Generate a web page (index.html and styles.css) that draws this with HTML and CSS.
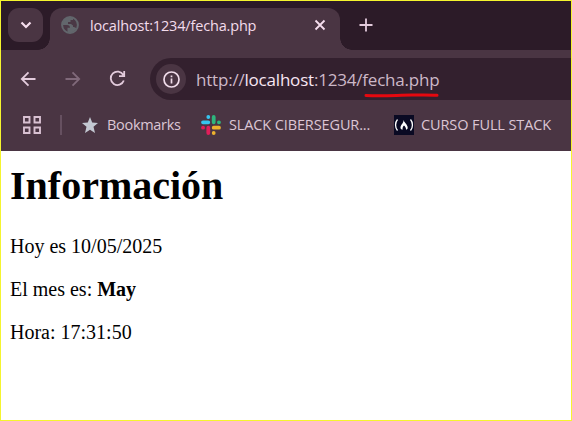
FILE: index.html
```html
<!DOCTYPE html>
<html lang="es">
<head>
<meta charset="utf-8">
<title>fecha.php</title>
<link rel="stylesheet" href="styles.css">
</head>
<body>
<div class="window">
  <header class="tabstrip">
    <div class="tab-search"><svg width="12" height="8" viewBox="0 0 12 8"><path d="M1.500 1.500 6 6l4.500-4.500" fill="none" stroke="#f6deee" stroke-width="2.200"/></svg></div>
    <div class="tab">
      <svg class="globe" width="18" height="18" viewBox="0 0 18 18"><circle cx="9" cy="9" r="7.900" fill="#4a3845" stroke="#62666c" stroke-width="2"/><path d="M10 1C4 1 1 5 1 9h5c2 .1 3 1.300 3 2.800H6.500v4.700c4 .8 7-.9 9-4-1-1-2-1.500-3.500-1.500V9.500L10 8H7V6h2.500V4H12V2z" fill="#62666c"/></svg>
      <span class="title">localhost:1234/fecha.php</span>
      <svg class="close" width="12" height="12" viewBox="0 0 12 12"><path d="m1.500 1.500 9 9m0-9-9 9" stroke="#f6deee" stroke-width="1.800"/></svg>
    </div>
    <svg class="plus" width="14" height="14" viewBox="0 0 14 14"><path d="M7 .5v13M.5 7h13" stroke="#e3cbdc" stroke-width="1.800"/></svg>
  </header>
  <nav class="toolbar">
    <svg class="back" width="16" height="16" viewBox="0 0 16 16"><path d="M15.500 8H2M8.500 1.300 1.800 8l6.700 6.700" fill="none" stroke="#e3cbdc" stroke-width="1.800"/></svg>
    <svg class="forward" width="16" height="16" viewBox="0 0 16 16"><path d="M.5 8H14M7.500 1.300 14.200 8l-6.700 6.700" fill="none" stroke="#80697a" stroke-width="1.800"/></svg>
    <svg class="reload" width="17" height="17" viewBox="0 0 17 17"><path d="M14.300 5A6.700 6.700 0 1 0 14.800 10.500M15.200 1v5.200H10" fill="none" stroke="#e3cbdc" stroke-width="1.800"/></svg>
    <div class="omnibox">
      <div class="info"><svg width="17" height="17" viewBox="0 0 17 17"><circle cx="8.500" cy="8.500" r="7.500" fill="none" stroke="#f0dcea" stroke-width="1.700"/><path d="M8.500 7.500v5M8.500 4.500v1.700" stroke="#f0dcea" stroke-width="1.700"/></svg></div>
      <span class="url">http://<b>localhost</b>:1234/fecha.php</span>
      <svg class="mark" width="76" height="6" viewBox="0 0 76 6"><path d="M2 3.400C18 4.800 34 3 48 3c10 0 17-.3 25 .3" fill="none" stroke="#e6080f" stroke-width="3" stroke-linecap="round"/></svg>
    </div>
  </nav>
  <nav class="bookmarks">
    <svg class="apps" width="18" height="18" viewBox="0 0 18 18"><path d="M1 1h5.500v5.500H1zM11.500 1H17v5.500h-5.500zM1 11.500h5.500V17H1zM11.500 11.500H17V17h-5.500z" fill="none" stroke="#d9c1d2" stroke-width="1.900"/></svg>
    <i class="divider"></i>
    <svg class="star" width="16" height="16" viewBox="0 0 16 16"><path d="m8 0 2.200 5.500 5.800.5-4.500 3.800L13 16l-5-3.300L3 16l1.500-6.200L0 6l5.800-.5z" fill="#c3c8d2"/></svg>
    <span class="label bm">Bookmarks</span>
    <svg class="slack" width="20" height="20" viewBox="0 0 20 20"><g stroke-width="3.800" stroke-linecap="round"><path d="M2 7.300h5.300M7.300 2v.1" stroke="#36c5f0"/><path d="M12.700 2v5.300M18 7.300h-.1" stroke="#2eb67d"/><path d="M18 12.700h-5.300M12.700 18v-.1" stroke="#ecb22e"/><path d="M7.300 18v-5.300M2 12.700h.1" stroke="#e01e5a"/></g></svg>
    <span class="label sl">SLACK CIBERSEGUR...</span>
    <svg class="fcc" width="20" height="20" viewBox="0 0 20 20"><path d="M0 0h20v20H0z" fill="#0a0a23"/><path d="M3.500 4.500c-2.600 3-2.600 8 0 11M16.500 4.500c2.600 3 2.600 8 0 11" fill="none" stroke="#fff" stroke-width="1.300"/><path d="M9.500 5c.5 2 3 3.500 4 6.500.5 1.800 0 2.800-1.300 3.300-.2-1.800-1-3.300-2.200-4.300-1.200 1-1.500 2.300-1.500 4.300-2-.5-2.500-1.800-1.700-3.800C7.700 9 9.800 7.500 9.500 5z" fill="#fff"/></svg>
    <span class="label cu">CURSO FULL STACK</span>
  </nav>
  <main class="page">
    <h1>Información</h1>
    <p>Hoy es 10/05/2025</p>
    <p>El mes es: <b>May</b></p>
    <p>Hora: 17:31:50</p>
  </main>
</div>
</body>
</html>
```
FILE: styles.css
```css
* { box-sizing: border-box; }
body { margin: 0; }
svg { display: block; flex: none; }
.window {
  width: 572px;
  height: 421px;
  border: 1px solid #f5f52e;
  background: #fff;
  display: flex;
  flex-direction: column;
  overflow: hidden;
  font-family: "Open Sans", "Noto Sans", sans-serif;
  white-space: nowrap;
}
.tabstrip {
  height: 49px;
  flex: none;
  display: flex;
  background: #2c1b28;
}
.tab-search {
  width: 35px;
  height: 34px;
  margin: 7px 0 0 7px;
  border-radius: 11px;
  background: #4a3543;
  display: flex;
  align-items: center;
  justify-content: center;
}
.tab {
  position: relative;
  width: 290px;
  height: 42px;
  margin: 7px 0 0 7px;
  padding: 0 14px 8px 11px;
  border-radius: 12px 12px 0 0;
  background: #4a3543;
  display: flex;
  align-items: center;
}
.tab::before,
.tab::after {
  content: "";
  position: absolute;
  bottom: 0;
  width: 12px;
  height: 12px;
}
.tab::before { left: -12px; background: radial-gradient(circle at 0 0, transparent 11.5px, #4a3543 12px); }
.tab::after { right: -12px; background: radial-gradient(circle at 100% 0, transparent 11.5px, #4a3543 12px); }
.title {
  margin-left: 11px;
  font-size: 14.5px;
  letter-spacing: -0.17px;
  color: #f3dcec;
}
.close { margin-left: auto; }
.plus { margin: 17px 0 0 19px; }
.toolbar {
  height: 50px;
  flex: none;
  display: flex;
  align-items: center;
  padding: 8px 0 0 19px;
  background: #4a3543;
}
.toolbar > svg { margin-bottom: 1px; }
.forward { margin-left: 29px; }
.reload { margin-left: 28px; }
.omnibox {
  position: relative;
  flex: 1;
  height: 42px;
  margin-left: 24px;
  padding-left: 6px;
  border-radius: 21px 0 0 21px;
  background: #33202e;
  display: flex;
  align-items: center;
}
.info {
  width: 30px;
  height: 30px;
  flex: none;
  border-radius: 50%;
  background: #4a3543;
  display: flex;
  align-items: center;
  justify-content: center;
}
.url {
  margin-left: 10px;
  font-size: 17px;
  letter-spacing: -0.2px;
  color: #cdb8c8;
}
.url b { font-weight: 400; color: #f8e6f3; }
.mark { position: absolute; left: 214px; top: 34px; }
.bookmarks {
  height: 51px;
  flex: none;
  display: flex;
  align-items: center;
  padding: 0 0 1px 22px;
  background: #4a3543;
}
.divider {
  width: 2px;
  height: 20px;
  margin-left: 19px;
  background: #665060;
}
.star { margin-left: 20px; }
.label { font-size: 14.5px; padding-bottom: 1px; color: #dcc6d5; }
.bm { margin-left: 9px; width: 94px; letter-spacing: -0.3px; }
.sl { margin-left: 8px; width: 165px; letter-spacing: -0.12px; }
.cu { margin-left: 7px; letter-spacing: -0.1px; }
.page {
  padding: 12px 9px 0;
  font-family: "Liberation Serif", serif;
  color: #000;
}
h1 { margin: 0 0 27px; font-size: 40px; line-height: 45px; }
p { margin: 0 0 20px; font-size: 20px; line-height: 23px; }
```
